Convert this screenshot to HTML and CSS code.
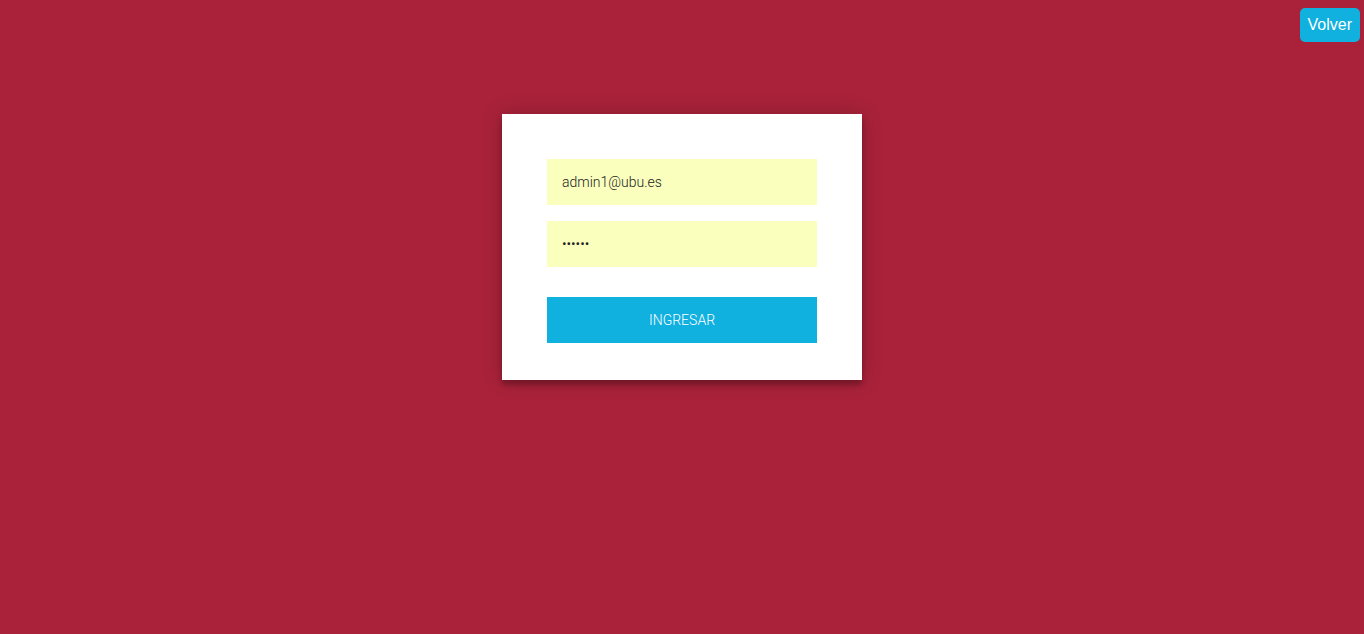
FILE: index.html
```html
<!DOCTYPE html>
<html lang="es">
<head>
<meta charset="utf-8">
<title>Login</title>
<link rel="stylesheet" href="styles.css">
</head>
<body>
<div class="topbar">
  <button class="back">Volver</button>
</div>
<div class="login-page">
  <form class="form">
    <input class="field" type="text" value="admin1@ubu.es">
    <input class="field" type="password" value="123456">
    <button class="submit" type="button">Ingresar</button>
  </form>
</div>
</body>
</html>
```

FILE: styles.css
```css
html, body {
  margin: 0;
  padding: 0;
  height: 100%;
}
body {
  background: #a9223a;
  font-family: Roboto, "Liberation Sans", sans-serif;
}
.topbar {
  display: flex;
  justify-content: flex-end;
  padding: 8px 4px 0 0;
}
.back {
  height: 34px;
  padding: 0 8px;
  border: 0;
  border-radius: 5px;
  background: #10b0df;
  color: #fff;
  font-family: "Liberation Sans", Arial, sans-serif;
  font-size: 16px;
}
.login-page {
  display: flex;
  justify-content: center;
  padding-top: 72px;
}
.form {
  width: 360px;
  box-sizing: border-box;
  background: #fff;
  padding: 45px 45px 37px;
  display: flex;
  flex-direction: column;
  box-shadow: 0 0 20px 0 rgba(0,0,0,0.2), 0 5px 5px 0 rgba(0,0,0,0.24);
}
.field {
  height: 46px;
  box-sizing: border-box;
  border: 0;
  outline: 0;
  margin: 0 0 16px;
  padding: 0 15px;
  background: #faffbd;
  color: #222;
  font-family: Roboto, sans-serif;
  font-weight: 300;
  font-size: 14px;
}
.field + .field {
  margin-bottom: 30px;
}
.submit {
  height: 46px;
  border: 0;
  background: #10b0df;
  color: #fff;
  font-family: Roboto, sans-serif;
  font-weight: 300;
  font-size: 14px;
  text-transform: uppercase;
}
```
